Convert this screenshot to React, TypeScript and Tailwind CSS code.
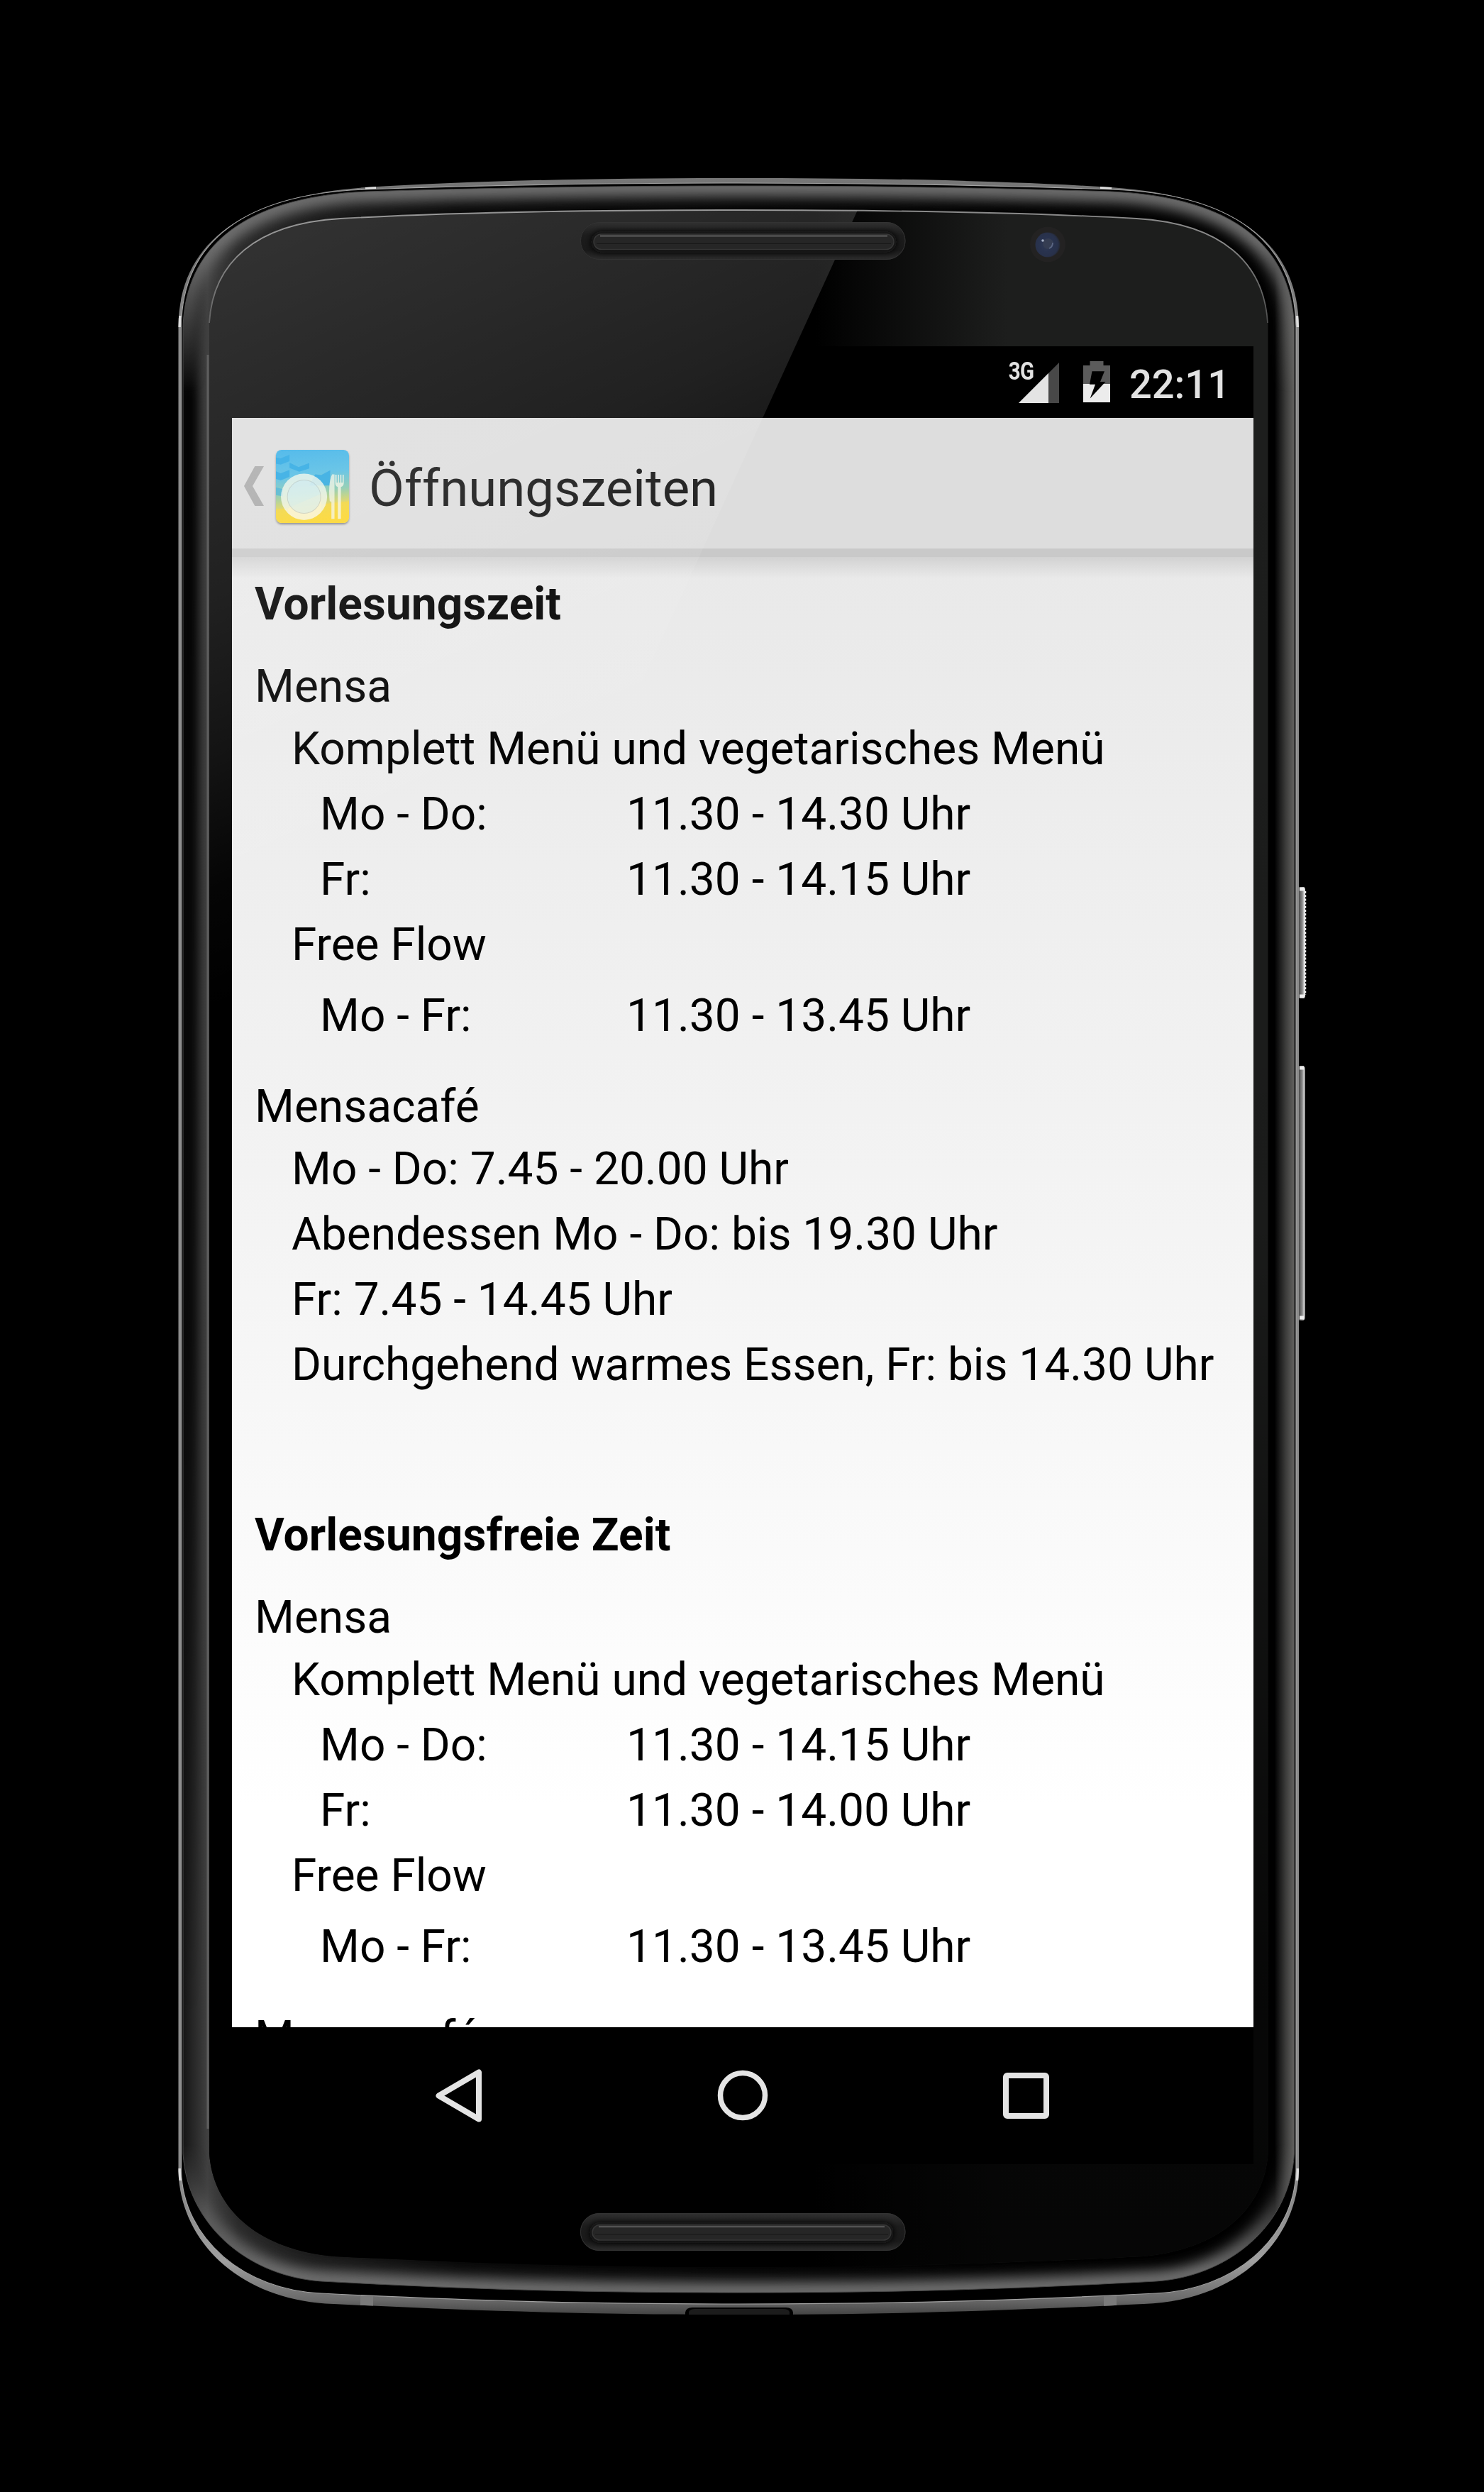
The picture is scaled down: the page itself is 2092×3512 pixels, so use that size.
import React from "react";
import { clsx } from "clsx";

type Corner = [number, number, number, number, number, number, number];

const AXIS = 2082.5;

// closed outline of the handset, mirrored around its vertical axis
// corner: straightEndY, c1x, c1y, c2x, c2y, x, y
function outline(left: number, top: Corner, topY: number, bottom: Corner, bottomY: number) {
  const m = (x: number) => AXIS - x;
  const [ty, t1x, t1y, t2x, t2y, tx, tey] = top;
  const [by, b1x, b1y, b2x, b2y, bx, bey] = bottom;
  return [
    `M${left} ${ty}`,
    `C${t1x} ${t1y} ${t2x} ${t2y} ${tx} ${tey}`,
    `C${tx + 160} ${topY + 3} ${tx + 340} ${topY} ${AXIS / 2} ${topY}`,
    `C${m(tx + 340)} ${topY} ${m(tx + 160)} ${topY + 3} ${m(tx)} ${tey}`,
    `C${m(t2x)} ${t2y} ${m(t1x)} ${t1y} ${m(left)} ${ty}`,
    `V${by}`,
    `C${m(b1x)} ${b1y} ${m(b2x)} ${b2y} ${m(bx)} ${bey}`,
    `C${m(bx + 220)} ${bottomY - 4} ${m(bx + 380)} ${bottomY} ${AXIS / 2} ${bottomY}`,
    `C${bx + 380} ${bottomY} ${bx + 220} ${bottomY - 4} ${bx} ${bey}`,
    `C${b2x} ${b2y} ${b1x} ${b1y} ${left} ${by}Z`,
  ].join(" ");
}

const RIM = outline(251.5, [460, 253, 330, 360, 275, 516, 264], 251, [3060, 254, 3160, 340, 3243, 470, 3247], 3262);
const RIM_INNER = outline(255.5, [460, 257, 340, 345, 273, 516, 267], 258, [3060, 258, 3155, 345, 3228, 453, 3232], 3247);
const BEZEL = outline(258, [460, 262, 350, 340, 278, 516, 270], 262, [3035, 264, 3136, 350, 3208, 453, 3215], 3231);
const GLASS = outline(295, [455, 300, 370, 360, 315, 480, 308], 296, [3035, 300, 3110, 360, 3170, 471, 3180], 3195);

function Handset() {
  return (
    <svg viewBox="0 0 2092 3512" className="absolute inset-0 h-full w-full" aria-hidden="true">
      <defs>
        <linearGradient id="rim" x1="0" y1="251" x2="0" y2="3262" gradientUnits="userSpaceOnUse">
          <stop offset="0" stopColor="#777" />
          <stop offset="0.03" stopColor="#6c6c6c" />
          <stop offset="0.07" stopColor="#8c8c8c" />
          <stop offset="0.95" stopColor="#8c8c8c" />
          <stop offset="0.975" stopColor="#a0a0a0" />
          <stop offset="0.993" stopColor="#6a6a6a" />
          <stop offset="1" stopColor="#444" />
        </linearGradient>
        <linearGradient id="bezel" x1="258" y1="0" x2="1825" y2="0" gradientUnits="userSpaceOnUse">
          <stop offset="0" stopColor="#161616" />
          <stop offset="0.012" stopColor="#2c2c2c" />
          <stop offset="0.022" stopColor="#404040" />
          <stop offset="0.05" stopColor="#2a2a2a" />
          <stop offset="0.12" stopColor="#1c1c1c" />
          <stop offset="0.25" stopColor="#0a0a0a" />
          <stop offset="0.9" stopColor="#000" />
          <stop offset="0.982" stopColor="#000" />
          <stop offset="0.992" stopColor="#3c3c3b" />
          <stop offset="1" stopColor="#646361" />
        </linearGradient>
        <linearGradient id="leftShade" x1="0" y1="440" x2="0" y2="2850" gradientUnits="userSpaceOnUse">
          <stop offset="0" stopColor="#000" stopOpacity="0" />
          <stop offset="0.05" stopColor="#000" stopOpacity="0.9" />
          <stop offset="0.6" stopColor="#000" stopOpacity="0.7" />
          <stop offset="1" stopColor="#000" stopOpacity="0" />
        </linearGradient>
        <linearGradient id="glass" x1="1150" y1="0" x2="1420" y2="0" gradientUnits="userSpaceOnUse">
          <stop offset="0" stopColor="#000" />
          <stop offset="1" stopColor="#1d1e1d" />
        </linearGradient>
        <linearGradient id="glassFade" x1="0" y1="500" x2="0" y2="3180" gradientUnits="userSpaceOnUse">
          <stop offset="0" stopColor="#000" stopOpacity="0" />
          <stop offset="0.45" stopColor="#000" stopOpacity="0.1" />
          <stop offset="0.85" stopColor="#000" stopOpacity="0.75" />
          <stop offset="1" stopColor="#000" stopOpacity="0.8" />
        </linearGradient>
        <linearGradient id="edgeMask" x1="0" y1="251" x2="0" y2="3262" gradientUnits="userSpaceOnUse">
          <stop offset="0" stopColor="#fff" />
          <stop offset="0.03" stopColor="#fff" />
          <stop offset="0.1" stopColor="#000" />
          <stop offset="0.92" stopColor="#000" />
          <stop offset="0.98" stopColor="#fff" />
        </linearGradient>
        <linearGradient id="key" x1="1831" y1="0" x2="1841" y2="0" gradientUnits="userSpaceOnUse">
          <stop offset="0" stopColor="#4a4a4a" />
          <stop offset="0.5" stopColor="#8e8e8e" />
          <stop offset="0.8" stopColor="#e6e6e6" />
          <stop offset="1" stopColor="#bbb" />
        </linearGradient>
        <filter id="soft" x="-5%" y="-5%" width="110%" height="110%">
          <feGaussianBlur stdDeviation="9" />
        </filter>
        <filter id="softSmall" x="-100%" y="-10%" width="300%" height="120%">
          <feGaussianBlur stdDeviation="6" />
        </filter>
        <clipPath id="rimClip">
          <path d={RIM} />
        </clipPath>
        <clipPath id="bezelClip">
          <path d={BEZEL} />
        </clipPath>
        <mask id="edges" maskUnits="userSpaceOnUse" x="0" y="0" width="2092" height="3512">
          <rect width="2092" height="3512" fill="url(#edgeMask)" />
        </mask>
      </defs>

      {/* side keys */}
      <rect x="1829" y="1250" width="11" height="157" rx="4" fill="url(#key)" />
      <path d="M1840 1256V1402" stroke="#f4f4f4" strokeWidth="2.5" strokeDasharray="3 2.2" />
      <rect x="1829" y="1502" width="10.5" height="359" rx="4" fill="url(#key)" />
      <path d="M1832 1253h7M1832 1404h7M1832 1505h6M1832 1857h6" stroke="#eee" strokeWidth="5" />

      {/* metal rim */}
      <path d={RIM} fill="url(#rim)" />
      <g clipPath="url(#rimClip)" fill="#dedede">
        <rect x="515" y="250" width="15" height="30" />
        <rect x="1551" y="250" width="16" height="30" />
        <rect x="250" y="445" width="10" height="16" />
        <rect x="1822" y="445" width="10" height="16" />
        <rect x="250" y="3056" width="12" height="17" />
        <rect x="1820" y="3056" width="12" height="17" />
        <rect x="508" y="3225" width="18" height="30" fill="#7a7a7a" />
        <rect x="1556" y="3225" width="18" height="30" fill="#7a7a7a" />
      </g>
      <path d={RIM_INNER} fill="#000" stroke="#a2a2a2" strokeWidth="1.2" />

      {/* bezel */}
      <g clipPath="url(#bezelClip)">
        <path d={BEZEL} fill="url(#bezel)" />
        <rect x="254" y="440" width="24" height="2410" fill="url(#leftShade)" filter="url(#softSmall)" />
        <g mask="url(#edges)">
          <path d={BEZEL} fill="none" stroke="#707070" strokeWidth="30" filter="url(#soft)" />
        </g>
      </g>
      <path d={BEZEL} fill="none" stroke="#4a4a4a" strokeWidth="1" />
      <path d="M293 500V3000" stroke="#fff" strokeOpacity="0.16" strokeWidth="3" />

      {/* glass */}
      <path d={GLASS} fill="url(#glass)" />
      <path d={GLASS} fill="url(#glassFade)" />
      <g mask="url(#edges)">
        <path d="M295 455C300 370 360 315 480 308C640 299 820 296 1041 296C1262 296 1442 299 1602 308C1722 315 1782 370 1787 455" fill="none" stroke="#8a8a8a" strokeWidth="1.8" />
      </g>

      {/* usb port */}
      <path d="M966 3264V3259Q967 3252 976 3252H1108Q1117 3252 1118 3259V3264Z" fill="#000" />
      <path d="M971 3262V3258Q973 3254 980 3254H1104Q1111 3254 1113 3258V3262Z" fill="#1c1c1c" />
    </svg>
  );
}

function Grille({ y, innerX, innerY, innerW }: { y: number; innerX: number; innerY: number; innerW: number }) {
  return (
    <g>
      <rect x="818" y={y} width="458.5" height="53" rx="26.5" fill="#262626" />
      <rect x="818.5" y={y + 0.5} width="457.5" height="52" rx="26" fill="url(#grille)" stroke="#333" />
      <rect x={innerX - 4} y={innerY - 4} width={innerW + 8} height="30" rx="15" fill="#0a0a0a" filter="url(#grilleBlur)" />
      <rect x={innerX} y={innerY} width={innerW} height="21.5" rx="10.7" fill="#262626" stroke="#363636" strokeWidth="1.5" />
      <path d={`M${innerX + 9} ${innerY + 2.5}h${innerW - 18}`} stroke="#525252" strokeWidth="2.5" />
      <path d={`M${innerX + 4} ${innerY + 13.5}h${innerW - 8}`} stroke="#161616" strokeWidth="1" />
    </g>
  );
}

// diagonal reflection, earpiece, speaker and camera lie above the display
function Glare() {
  return (
    <svg viewBox="0 0 2092 3512" className="pointer-events-none absolute inset-0 h-full w-full" aria-hidden="true">
      <defs>
        <linearGradient id="glare" x1="330" y1="350" x2="780" y2="1330" gradientUnits="userSpaceOnUse">
          <stop offset="0" stopColor="#fff" stopOpacity="0.195" />
          <stop offset="0.4" stopColor="#fff" stopOpacity="0.13" />
          <stop offset="0.6" stopColor="#fff" stopOpacity="0.075" />
          <stop offset="0.75" stopColor="#fff" stopOpacity="0.02" />
          <stop offset="0.9" stopColor="#fff" stopOpacity="0" />
        </linearGradient>
        <linearGradient id="grille" x1="0" y1="0" x2="0" y2="1">
          <stop offset="0" stopColor="#303030" />
          <stop offset="0.35" stopColor="#1c1c1c" />
          <stop offset="0.75" stopColor="#191919" />
          <stop offset="1" stopColor="#2c2c2c" />
        </linearGradient>
        <radialGradient id="lens" cx="0.45" cy="0.5" r="0.55">
          <stop offset="0" stopColor="#303a55" />
          <stop offset="0.5" stopColor="#29334f" />
          <stop offset="0.85" stopColor="#28314a" />
          <stop offset="1" stopColor="#24262e" />
        </radialGradient>
        <filter id="grilleBlur" x="-10%" y="-60%" width="120%" height="220%">
          <feGaussianBlur stdDeviation="4" />
        </filter>
        <clipPath id="glassClip">
          <path d={GLASS} />
        </clipPath>
      </defs>
      <path d="M258 250H1230L700 1410H258Z" fill="url(#glare)" clipPath="url(#glassClip)" />
      <Grille y={313} innerX={837} innerY={330} innerW={423} />
      <Grille y={3119} innerX={835} innerY={3135.5} innerW={421} />
      <circle cx="1477" cy="344.500" r="25" fill="#232222" />
      <circle cx="1477" cy="345" r="17.500" fill="url(#lens)" />
      <circle cx="1477.500" cy="343.500" r="7.500" fill="#353d52" />
      <circle cx="1470" cy="339" r="1.800" fill="#a5b0c4" />
      <path d="M1479 350Q1484 348 1484 342" stroke="#5a6684" strokeWidth="1.8" fill="none" />
    </svg>
  );
}

function StatusBar() {
  return (
    <div className="flex h-[101px] shrink-0 items-start justify-end pr-[33px] text-[#e2e2e2]">
      <span className="mt-[18px] -mr-[21px] origin-right scale-x-[0.84] text-[35px] leading-[36px] font-bold tracking-tight">
        3G
      </span>
      <svg viewBox="0 0 57 57" className="mt-[23px] h-[57px] w-[57px]">
        <path d="M57 0V57H0Z" fill="#484848" />
        <path d="M42 15V57H0Z" fill="#e4e4e4" />
      </svg>
      <svg viewBox="0 0 38 58" className="mt-[21px] ml-[34px] h-[58px] w-[38px]">
        <path d="M0 6H9.500V0H28.500V6H38V32H0Z" fill="#5b5b5b" />
        <path d="M0 32H38V58H0Z" fill="#ececec" />
        <path d="M12.500 14.300H30L24 29H31.500L9.700 52.500L17 32.700H9Z" fill="#000" />
      </svg>
      <span className="mt-[21px] ml-[27px] text-[56px] leading-[66px] font-medium">22:11</span>
    </div>
  );
}

function CanteenIcon() {
  return (
    <svg viewBox="0 0 307 307" className="h-[103px] w-[103px] rounded-[8px] shadow-[0_2px_3px_rgba(0,0,0,0.4)]">
      <defs>
        <linearGradient id="sky" x1="0" y1="0" x2="0.12" y2="1">
          <stop offset="0" stopColor="#37afe8" />
          <stop offset="0.38" stopColor="#52bce3" />
          <stop offset="0.62" stopColor="#86c8ac" />
          <stop offset="0.82" stopColor="#e3d353" />
          <stop offset="1" stopColor="#fad62c" />
        </linearGradient>
        <clipPath id="plate">
          <circle cx="118" cy="197" r="97" />
        </clipPath>
      </defs>
      <rect width="307" height="307" fill="url(#sky)" />
      <g fill="#22a4e2" opacity="0.85">
        <path d="M0 32L20 36L57 20V48L20 62L0 58Z" />
        <path d="M0 90L20 98L57 84V113L20 128L0 122Z" />
        <path d="M57 54L95 72L140 55V78L98 92L57 76Z" />
        <path d="M165 103L190 106L228 86V150H140Z" />
        <path d="M0 158L30 165V195L0 190Z" opacity="0.6" />
      </g>
      <path d="M0 250L307 215V307H0Z" fill="#fbd62a" opacity="0.55" />
      <circle cx="118" cy="197" r="97" fill="#f2f6ea" opacity="0.8" />
      <g clipPath="url(#plate)">
        <path d="M50 245L190 185V300H50Z" fill="#fdf3c4" opacity="0.55" />
        <circle cx="118" cy="197" r="70" fill="#bfe6f5" opacity="0.4" stroke="#8b9da6" strokeWidth="3" />
      </g>
      <path d="M236 103C222 130 222 180 226 215L233 218V290H246V103Z" fill="#f4f4e4" opacity="0.75" />
      <path
        d="M249 104V140Q249 152 260 156V290H273V156Q285 152 285 140V104H280V138H275V104H270V138H265V104H260V138H255V104Z"
        fill="#f4f4e4"
        opacity="0.8"
      />
    </svg>
  );
}

function AppBar() {
  return (
    <div className="flex h-[196px] shrink-0 items-center border-b-[12px] border-[#c9c9c9] bg-[#dddddd] pl-[17px]">
      <svg viewBox="0 0 28 56" className="mt-2 h-[56px] w-[28px]">
        <path d="M15.300 0H28L12 28L28 56H15.300L0 28Z" fill="#a9a9a9" />
      </svg>
      <div className="mt-2 ml-[17px]">
        <CanteenIcon />
      </div>
      <h1 className="mt-4 ml-[28px] text-[72.500px] leading-[84px] text-[#111]">Öffnungszeiten</h1>
    </div>
  );
}

type Slot = { days: string; time: string };

type Period = {
  title: string;
  menu: Slot[];
  freeFlow: Slot;
  cafe: string[];
};

const periods: Period[] = [
  {
    title: "Vorlesungszeit",
    menu: [
      { days: "Mo - Do:", time: "11.30 - 14.30 Uhr" },
      { days: "Fr:", time: "11.30 - 14.15 Uhr" },
    ],
    freeFlow: { days: "Mo - Fr:", time: "11.30 - 13.45 Uhr" },
    cafe: [
      "Mo - Do: 7.45 - 20.00 Uhr",
      "Abendessen Mo - Do: bis 19.30 Uhr",
      "Fr: 7.45 - 14.45 Uhr",
      "Durchgehend warmes Essen, Fr: bis 14.30 Uhr",
    ],
  },
  {
    title: "Vorlesungsfreie Zeit",
    menu: [
      { days: "Mo - Do:", time: "11.30 - 14.15 Uhr" },
      { days: "Fr:", time: "11.30 - 14.00 Uhr" },
    ],
    freeFlow: { days: "Mo - Fr:", time: "11.30 - 13.45 Uhr" },
    cafe: [],
  },
];

function SlotRow({ slot, className }: { slot: Slot; className?: string }) {
  return (
    <div className={clsx("flex h-[92px] pl-[92px]", className)}>
      <span className="w-[432px]">{slot.days}</span>
      <span>{slot.time}</span>
    </div>
  );
}

function PeriodSection({ period }: { period: Period }) {
  return (
    <section className="h-[1312px] shrink-0">
      <h2 className="h-[116px] font-bold tracking-[0.1px]">{period.title}</h2>
      <h3 className="h-[88px]">Mensa</h3>
      <p className="h-[92px] pl-[52px]">Komplett Menü und vegetarisches Menü</p>
      {period.menu.map((slot) => (
        <SlotRow key={slot.days} slot={slot} />
      ))}
      <p className="h-[100px] pl-[52px]">Free Flow</p>
      <SlotRow slot={period.freeFlow} />
      <h3 className="mt-9 h-[88px]">Mensacafé</h3>
      {period.cafe.map((line) => (
        <p key={line} className="h-[92px] pl-[52px]">
          {line}
        </p>
      ))}
    </section>
  );
}

function NavBar() {
  return (
    <nav className="flex h-[193px] shrink-0 items-center justify-center bg-black pb-px">
      <div className="flex w-[400px] justify-center pr-0.5">
        <svg viewBox="0 0 65 75" className="h-[75px] w-[65px]" fill="none" stroke="#e4e4e4" strokeWidth="8" strokeLinejoin="round">
          <path d="M61 4.500V70.500L4.500 37.500Z" />
        </svg>
      </div>
      <div className="flex w-[400px] justify-center">
        <svg viewBox="0 0 72 72" className="h-[72px] w-[72px]" fill="none" stroke="#e4e4e4" strokeWidth="7.5">
          <circle cx="36" cy="36" r="31.500" />
        </svg>
      </div>
      <div className="flex w-[400px] justify-center pr-px">
        <div className="h-[65px] w-[65px] rounded-[6px] border-8 border-[#e4e4e4]" />
      </div>
    </nav>
  );
}

export default function App() {
  return (
    <div className="relative h-[3512px] w-[2092px] overflow-hidden bg-black pt-[488px] pl-[327px] font-['Roboto',sans-serif]">
      <Handset />
      <main className="relative flex h-[2562px] w-[1440px] flex-col bg-black">
        <StatusBar />
        <AppBar />
        <div className="h-[2072px] shrink-0 overflow-hidden bg-linear-to-b from-[#e9e9e9] via-[#f5f5f5] via-50% to-white to-85% text-[64px] leading-[74px] text-black">
          <div className="h-[30px] bg-linear-to-b from-black/10 to-transparent" />
          <div className="pl-8">
            {periods.map((period) => (
              <PeriodSection key={period.title} period={period} />
            ))}
          </div>
        </div>
        <NavBar />
      </main>
      <Glare />
    </div>
  );
}
